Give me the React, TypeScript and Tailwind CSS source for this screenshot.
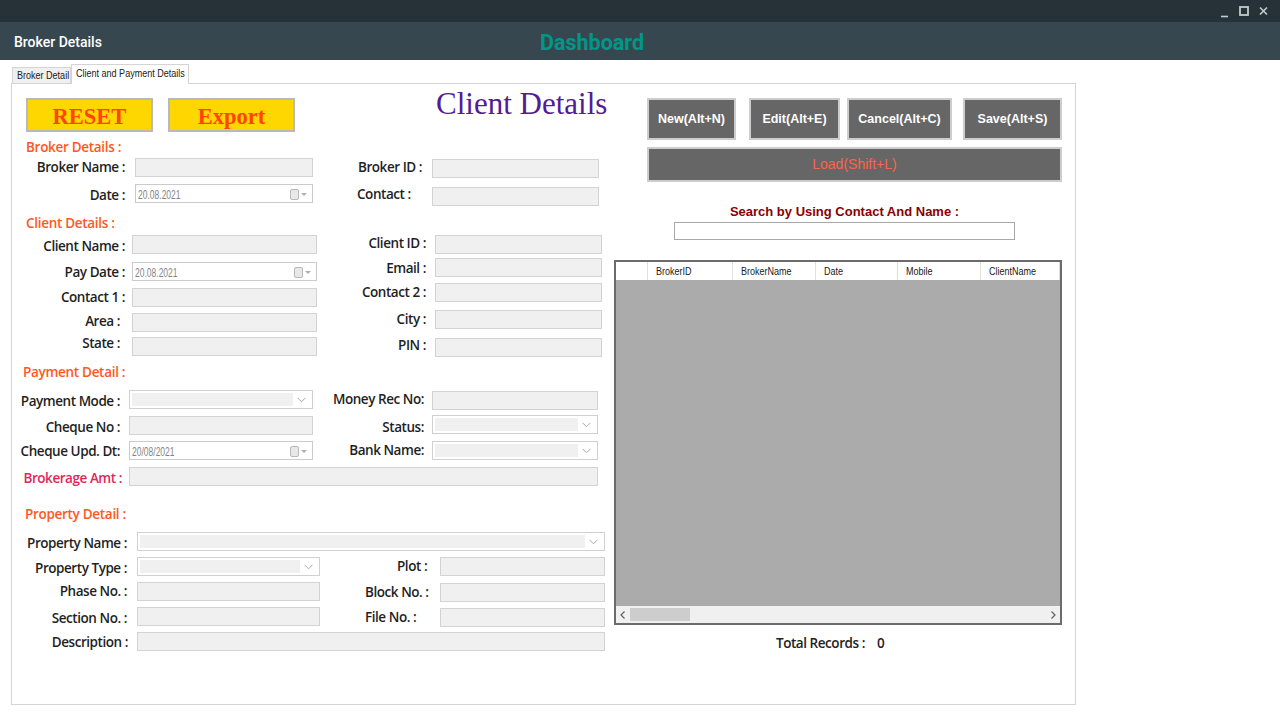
import type { ReactNode } from "react";

type Props = { children?: ReactNode; className?: string };

// labels are a fixed 19px tall; the leading class nudges the text up or down without moving the row
const Lbl = ({ children, className = "" }: Props) => (
  <span
    className={`shrink-0 h-[19px] whitespace-nowrap text-[13.5px] font-semibold tracking-[-0.45px] text-[#1f1f1f] ${className}`}
  >
    {children}
  </span>
);

const SectionTitle = ({ children, className = "" }: Props) => (
  <div
    className={`h-[19px] leading-[19px] whitespace-nowrap text-[13.5px] font-semibold tracking-[-0.3px] text-[#ff5722] ${className}`}
  >
    {children}
  </div>
);

const TextBox = ({ className = "" }: Props) => (
  <div className={`shrink-0 h-[19px] border border-[#d3d3d3] bg-[#f0f0f0] ${className}`} />
);

const DateBox = ({ value, className = "" }: { value: string; className?: string }) => (
  <div
    className={`shrink-0 h-[19px] border border-[#cbcbcb] bg-white flex items-center pl-[2px] pr-[4px] ${className}`}
  >
    <div className="flex-1 overflow-hidden -mt-[2px]">
      <span className="inline-block origin-left scale-x-[0.68] text-[12.5px] leading-none text-[#858585] font-['Liberation_Sans',Arial,sans-serif]">
        {value}
      </span>
    </div>
    <svg width="18" height="12" viewBox="0 0 18 12">
      <rect x="0.5" y="1.5" width="8" height="10" rx="1.5" fill="#e8e8e8" stroke="#b8b8b8" />
      <path d="M11 5h6l-3 3z" fill="#b0b0b0" />
    </svg>
  </div>
);

const Combo = ({ className = "" }: Props) => (
  <div className={`shrink-0 h-[19px] border border-[#d0d0d0] bg-white flex items-stretch p-[2px] ${className}`}>
    <div className="flex-1 bg-[#f0f0f0]" />
    <div className="w-[17px] flex items-center justify-center">
      <svg width="9" height="6" viewBox="0 0 9 6">
        <path d="M0.5 0.8l4 4 4-4" fill="none" stroke="#a9a9a9" />
      </svg>
    </div>
  </div>
);

const YellowBtn = ({ children, className = "" }: Props) => (
  <div
    className={`shrink-0 w-[127px] h-[34px] pt-[3px] border-2 border-[#b9b9b9] bg-[#ffd700] flex items-center justify-center text-[22.5px] font-bold text-[#ff4500] font-['Liberation_Serif','Times_New_Roman',serif] ${className}`}
  >
    {children}
  </div>
);

const DarkBtn = ({ children, className = "" }: Props) => (
  <div
    className={`shrink-0 h-[42px] border-2 border-[#cdcdcd] bg-[#666666] flex items-center justify-center text-[12.5px] font-bold text-white font-['Liberation_Sans',Arial,sans-serif] ${className}`}
  >
    {children}
  </div>
);

const Narrow = ({ children, className = "" }: Props) => (
  <span
    className={`inline-block origin-left scale-x-[0.82] whitespace-nowrap text-[11px] leading-none font-['Liberation_Sans',Arial,sans-serif] ${className}`}
  >
    {children}
  </span>
);

const columns = [
  { name: "BrokerID", w: "w-[85px]" },
  { name: "BrokerName", w: "w-[83px]" },
  { name: "Date", w: "w-[82px]" },
  { name: "Mobile", w: "w-[83px]" },
  { name: "ClientName", w: "flex-1" },
];

export default function App() {
  return (
    <div className="w-[1280px] h-[720px] bg-white flex flex-col overflow-hidden font-['Open_Sans','Noto_Sans',sans-serif]">
      {/* window bar */}
      <div className="h-[22px] shrink-0 bg-[#263238] flex items-center justify-end pr-[12px]">
        <svg width="48" height="12" viewBox="0 0 48 12" className="mt-[2px]">
          <path d="M1 10.5h7" stroke="#c3cbcf" strokeWidth="1.6" />
          <rect x="20" y="1" width="8" height="8" fill="none" stroke="#c3cbcf" strokeWidth="1.8" />
          <path d="M40 1.5l7 7M47 1.5l-7 7" stroke="#c3cbcf" strokeWidth="1.6" />
        </svg>
      </div>

      {/* header */}
      <div className="h-[38px] shrink-0 bg-[#37474f] flex items-center font-['Roboto',sans-serif]">
        <span className="ml-[14px] mt-[2px] w-[526px] text-[14px] font-medium text-white">Broker Details</span>
        <span className="mt-[4px] text-[21.5px] font-bold text-[#009688]">Dashboard</span>
      </div>

      <div className="pl-[11px] pt-[4px]">
        {/* tabs */}
        <div className="relative z-10 flex items-end h-[19px] ml-[1px]">
          <div className="w-[59px] h-[16px] border border-b-0 border-[#d4d4d4] bg-[#f0f0f0] flex items-center pl-[4px] text-[#1a1a1a]">
            <Narrow>Broker Detail</Narrow>
          </div>
          <div className="w-[118px] h-[20px] -mb-px border border-b-0 border-[#d4d4d4] bg-white flex items-center pl-[4px] pb-[2px] text-[#1a1a1a]">
            <Narrow>Client and Payment Details</Narrow>
          </div>
        </div>

        {/* panel */}
        <div className="w-[1065px] h-[622px] border border-[#d4d4d4] flex">
          {/* left form */}
          <div className="w-[602px] shrink-0 flex flex-col">
            <div className="mt-[14px] h-[34px] flex items-start">
              <YellowBtn className="ml-[14px]">RESET</YellowBtn>
              <YellowBtn className="ml-[15px]">Export</YellowBtn>
              <div className="ml-[141px] -mt-[10px] whitespace-nowrap text-[31px] leading-[31px] text-[#541b95] font-['Liberation_Serif',serif]">
                Client Details
              </div>
            </div>

            {/* broker */}
            <SectionTitle className="mt-[6px] ml-[14px]">Broker Details :</SectionTitle>
            <div className="flex">
              <div className="w-[301px] flex flex-col">
                <div className="mt-[1px] flex items-center">
                  <Lbl className="w-[113px] text-right leading-[19px]">Broker Name :</Lbl>
                  <TextBox className="ml-[10px] w-[178px]" />
                </div>
                <div className="mt-[7px] flex items-center">
                  <Lbl className="w-[113px] text-right leading-[23px]">Date :</Lbl>
                  <DateBox value="20.08.2021" className="ml-[10px] w-[178px]" />
                </div>
              </div>
              <div className="flex flex-col">
                <div className="mt-[2px] flex items-center">
                  <Lbl className="ml-[45px] w-[74px] leading-[16px]">Broker ID :</Lbl>
                  <TextBox className="w-[167px]" />
                </div>
                <div className="mt-[9px] flex items-center">
                  <Lbl className="ml-[44px] w-[75px] leading-[15px]">Contact :</Lbl>
                  <TextBox className="w-[167px]" />
                </div>
              </div>
            </div>

            {/* client */}
            <SectionTitle className="mt-[8px] ml-[14px]">Client Details :</SectionTitle>
            <div className="flex">
              <div className="w-[305px] flex flex-col">
                <div className="mt-[2px] flex items-center">
                  <Lbl className="w-[113px] text-right leading-[23px]">Client Name :</Lbl>
                  <TextBox className="ml-[7px] w-[185px]" />
                </div>
                <div className="mt-[8px] flex items-center">
                  <Lbl className="w-[113px] text-right leading-[21px]">Pay Date :</Lbl>
                  <DateBox value="20.08.2021" className="ml-[7px] w-[185px]" />
                </div>
                <div className="mt-[7px] flex items-center">
                  <Lbl className="w-[113px] text-right leading-[19px]">Contact 1 :</Lbl>
                  <TextBox className="ml-[7px] w-[185px]" />
                </div>
                <div className="mt-[6px] flex items-center">
                  <Lbl className="w-[113px] text-right pr-[5px] leading-[17px]">Area :</Lbl>
                  <TextBox className="ml-[7px] w-[185px]" />
                </div>
                <div className="mt-[5px] flex items-center">
                  <Lbl className="w-[113px] text-right pr-[5px] leading-[12px]">State :</Lbl>
                  <TextBox className="ml-[7px] w-[185px]" />
                </div>
              </div>
              <div className="flex flex-col">
                <div className="mt-[2px] flex items-center">
                  <Lbl className="w-[109px] text-right leading-[17px]">Client ID :</Lbl>
                  <TextBox className="ml-[9px] w-[167px]" />
                </div>
                <div className="mt-[4px] flex items-center">
                  <Lbl className="w-[109px] text-right leading-[21px]">Email :</Lbl>
                  <TextBox className="ml-[9px] w-[167px]" />
                </div>
                <div className="mt-[6px] flex items-center">
                  <Lbl className="w-[109px] text-right leading-[19px]">Contact 2 :</Lbl>
                  <TextBox className="ml-[9px] w-[167px]" />
                </div>
                <div className="mt-[8px] flex items-center">
                  <Lbl className="w-[109px] text-right leading-[19px]">City :</Lbl>
                  <TextBox className="ml-[9px] w-[167px]" />
                </div>
                <div className="mt-[9px] flex items-center">
                  <Lbl className="w-[109px] text-right leading-[15px]">PIN :</Lbl>
                  <TextBox className="ml-[9px] w-[167px]" />
                </div>
              </div>
            </div>

            {/* payment */}
            <SectionTitle className="mt-[6px] ml-[11px]">Payment Detail :</SectionTitle>
            <div className="flex">
              <div className="w-[301px] flex flex-col">
                <div className="mt-[8px] flex items-center">
                  <Lbl className="w-[108px] text-right leading-[23px]">Payment Mode :</Lbl>
                  <Combo className="ml-[9px] w-[184px]" />
                </div>
                <div className="mt-[7px] flex items-center">
                  <Lbl className="w-[108px] text-right leading-[22px]">Cheque No :</Lbl>
                  <TextBox className="ml-[9px] w-[184px] h-[18px]" />
                </div>
                <div className="mt-[6px] flex items-center">
                  <Lbl className="w-[108px] text-right leading-[21px]">Cheque Upd. Dt:</Lbl>
                  <DateBox value="20/08/2021" className="ml-[9px] w-[184px]" />
                </div>
              </div>
              <div className="flex flex-col">
                <div className="mt-[9px] flex items-center">
                  <Lbl className="w-[111px] text-right leading-[17px]">Money Rec No:</Lbl>
                  <TextBox className="ml-[8px] w-[166px]" />
                </div>
                <div className="mt-[5px] flex items-center">
                  <Lbl className="w-[111px] text-right leading-[24px]">Status:</Lbl>
                  <Combo className="ml-[8px] w-[166px]" />
                </div>
                <div className="mt-[7px] flex items-center">
                  <Lbl className="w-[111px] text-right leading-[19px]">Bank Name:</Lbl>
                  <Combo className="ml-[8px] w-[166px]" />
                </div>
              </div>
            </div>
            <div className="mt-[7px] flex items-center">
              <Lbl className="w-[110px] text-right leading-[23px] text-[#e3265a]">Brokerage Amt :</Lbl>
              <TextBox className="ml-[7px] w-[469px] h-[18px]" />
            </div>

            {/* property */}
            <SectionTitle className="mt-[19px] ml-[13px]">Property Detail :</SectionTitle>
            <div className="mt-[8px] flex items-center">
              <Lbl className="w-[115px] text-right leading-[23px]">Property Name :</Lbl>
              <Combo className="ml-[10px] w-[468px]" />
            </div>
            <div className="flex">
              <div className="w-[308px] flex flex-col">
                <div className="mt-[6px] flex items-center">
                  <Lbl className="w-[115px] text-right leading-[22px]">Property Type :</Lbl>
                  <Combo className="ml-[10px] w-[183px]" />
                </div>
                <div className="mt-[6px] flex items-center">
                  <Lbl className="w-[115px] text-right leading-[19px]">Phase No. :</Lbl>
                  <TextBox className="ml-[10px] w-[183px]" />
                </div>
                <div className="mt-[6px] flex items-center">
                  <Lbl className="w-[115px] text-right leading-[22px]">Section No. :</Lbl>
                  <TextBox className="ml-[10px] w-[183px]" />
                </div>
              </div>
              <div className="flex flex-col">
                <div className="mt-[6px] flex items-center">
                  <Lbl className="w-[120px] pl-[77px] leading-[19px]">Plot :</Lbl>
                  <TextBox className="w-[165px]" />
                </div>
                <div className="mt-[7px] flex items-center">
                  <Lbl className="w-[120px] pl-[45px] leading-[19px]">Block No. :</Lbl>
                  <TextBox className="w-[165px] h-[18px]" />
                </div>
                <div className="mt-[6px] flex items-center">
                  <Lbl className="w-[120px] pl-[45px] leading-[19px]">File No. :</Lbl>
                  <TextBox className="w-[165px]" />
                </div>
              </div>
            </div>
            <div className="mt-[5px] flex items-center">
              <Lbl className="w-[116px] text-right leading-[21px]">Description :</Lbl>
              <TextBox className="ml-[9px] w-[468px]" />
            </div>
          </div>

          {/* right side */}
          <div className="flex-1 flex flex-col">
            <div className="mt-[14px] flex">
              <DarkBtn className="ml-[33px] w-[89px]">New(Alt+N)</DarkBtn>
              <DarkBtn className="ml-[13px] w-[91px]">Edit(Alt+E)</DarkBtn>
              <DarkBtn className="ml-[7px] w-[105px]">Cancel(Alt+C)</DarkBtn>
              <DarkBtn className="ml-[11px] w-[99px]">Save(Alt+S)</DarkBtn>
            </div>
            <div className="mt-[7px] ml-[33px] w-[415px] h-[35px] border-2 border-[#cdcdcd] bg-[#666666] flex items-center justify-center text-[14px] text-[#ff6347] font-['Liberation_Sans',Arial,sans-serif]">
              Load(Shift+L)
            </div>

            <div className="mt-[21px] h-[18px] leading-[18px] text-center text-[13px] font-bold text-[#8b0000] font-['Liberation_Sans',Arial,sans-serif]">
              Search by Using Contact And Name :
            </div>
            <div className="mt-[1px] mx-auto w-[341px] h-[18px] border border-[#a8a8a8] bg-white" />

            {/* grid */}
            <div className="mt-[20px] w-[448px] h-[365px] border-2 border-[#6b6b6b] bg-[#ababab] flex flex-col">
              <div className="h-[18px] bg-white flex text-[#1a1a1a]">
                <div className="w-[32px] border-r border-[#dedede]" />
                {columns.map((col) => (
                  <div key={col.name} className={`${col.w} border-r border-[#dedede] flex items-center pl-[8px] overflow-hidden`}>
                    <Narrow>{col.name}</Narrow>
                  </div>
                ))}
              </div>
              <div className="flex-1" />
              <div className="h-[17px] bg-[#f0f0f0] flex items-center">
                <div className="w-[14px] flex items-center justify-center">
                  <svg width="6" height="8" viewBox="0 0 6 8">
                    <path d="M4.5 0.5L1 4l3.5 3.5" fill="none" stroke="#606060" strokeWidth="1.2" />
                  </svg>
                </div>
                <div className="w-[60px] h-[13px] bg-[#cdcdcd]" />
                <div className="flex-1" />
                <div className="w-[14px] flex items-center justify-center">
                  <svg width="6" height="8" viewBox="0 0 6 8">
                    <path d="M1.5 0.5L5 4 1.5 7.5" fill="none" stroke="#606060" strokeWidth="1.2" />
                  </svg>
                </div>
              </div>
            </div>

            <div className="mt-[9px] ml-[162px] flex items-center h-[18px]">
              <Lbl className="leading-[19px] text-[#222222]">Total Records :</Lbl>
              <Lbl className="ml-[12px] leading-[19px] text-[#222222]">0</Lbl>
            </div>
          </div>
        </div>
      </div>
    </div>
  );
}
